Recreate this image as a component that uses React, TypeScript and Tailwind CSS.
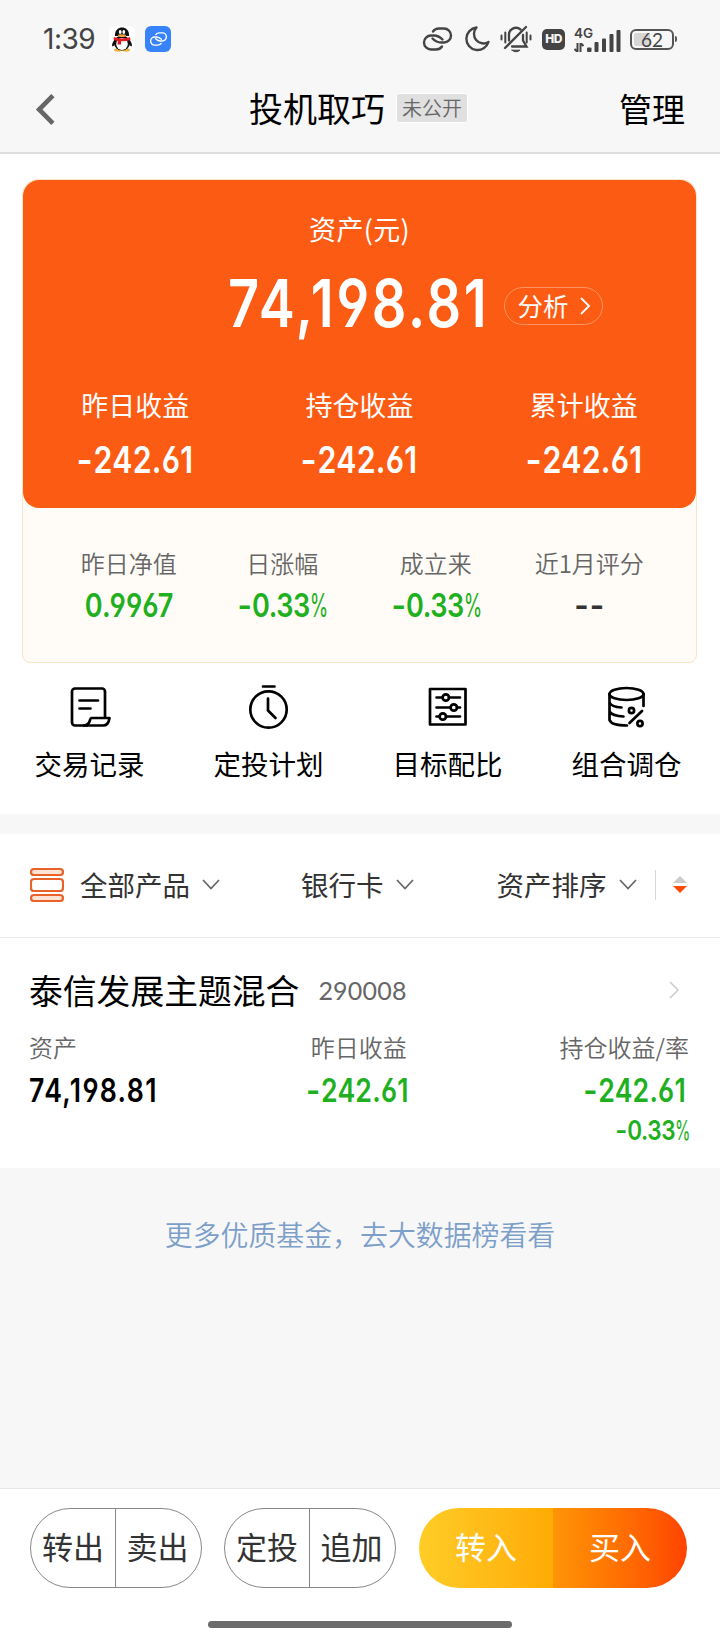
import type { ReactNode } from 'react';
import clsx from 'clsx';

interface NumProps {
  children: string;
  className?: string;
  origin?: 'left' | 'center' | 'right';
}

const ORIGINS = {
  left: 'origin-left',
  center: 'origin-center',
  right: 'origin-right',
};

// Condensed figures, with a wider minus and a lighter, narrower percent sign
function Num({ children, className, origin = 'center' }: NumProps) {
  const tracking = children.includes(',') ? 'tracking-[0.05em]' : children.endsWith('%') ? 'tracking-[-0.015em]' : 'tracking-[0.008em]';
  return (
    <span
      className={clsx(
        "inline-block scale-x-[0.82] whitespace-nowrap font-['Inter',sans-serif] font-semibold leading-none [font-feature-settings:'cv03','cv04']",
        tracking,
        ORIGINS[origin],
        className
      )}
    >
      {children.split(/([-%])/).filter(Boolean).map((part, i) => {
        if (part === '-') return <span key={i} className="mx-[0.04em] inline-block scale-x-[1.15]">-</span>;
        if (part === '%') return <span key={i} className="inline-block w-[0.6em] origin-left scale-x-[0.7] font-normal">%</span>;
        return part;
      })}
    </span>
  );
}

function LinkIcon({ className }: { className?: string }) {
  return (
    <svg viewBox="0 0 31 24" fill="none" stroke="currentColor" strokeWidth="2.4" strokeLinecap="round" className={className}>
      <path d="M11 4.500 Q13 1.500 17 1.500 H22 A7 7 0 0 1 22 15.500 H19 Q14.500 15.500 10.500 11.500" />
      <path d="M20 19.500 Q18 22.500 14 22.500 H9 A7 7 0 0 1 9 8.500 H12 Q16.500 8.500 20.500 12.500" />
    </svg>
  );
}

function Chevron({ dir, className }: { dir: 'left' | 'right' | 'down'; className?: string }) {
  const d = { left: 'M9 1 L1 9 L9 17', right: 'M1 1 L9 9 L1 17', down: 'M1 1 L9 9.5 L17 1' }[dir];
  return (
    <svg viewBox={dir === 'down' ? '0 0 18 11' : '0 0 10 18'} fill="none" stroke="currentColor" className={clsx('overflow-visible', className)}>
      <path d={d} />
    </svg>
  );
}

function StatusBar() {
  return (
    <div className="flex h-[78px] items-center pl-[43px] pr-[43px] text-[#444]">
      <span className="w-[66px] font-['Inter',sans-serif] text-[28px] leading-none tracking-[-0.5px]">1:39</span>
      <svg viewBox="0 0 26 26" className="h-[26px] w-[26px]">
        <rect width="26" height="26" rx="6" fill="#fff" />
        <ellipse cx="9" cy="24" rx="4" ry="1.7" fill="#f3b23c" />
        <ellipse cx="17" cy="24" rx="4" ry="1.7" fill="#f3b23c" />
        <path d="M6 13 Q2 18 3.4 20.5 Q5 20 6 18 Z M20 13 Q24 18 22.6 20.5 Q21 20 20 18 Z" fill="#111" />
        <ellipse cx="13" cy="17" rx="8" ry="7.5" fill="#111" />
        <path d="M6 10 C5 -1.500 21 -1.500 20 10 Z" fill="#111" />
        <ellipse cx="13" cy="18" rx="5.800" ry="6" fill="#fff" />
        <ellipse cx="11.200" cy="6" rx="1.400" ry="1.900" fill="#fff" />
        <ellipse cx="14.800" cy="6" rx="1.400" ry="1.900" fill="#fff" />
        <ellipse cx="13" cy="9.700" rx="4" ry="1.400" fill="#f3a23c" />
        <path d="M5 11 Q13 14 21 11 L21.500 14 Q17 15.500 12 15.300 L12 18.500 H8.500 L8.800 15 Q6 14.500 4.500 13.500 Z" fill="#e11d24" />
      </svg>
      <span className="ml-[10px] flex h-[26px] w-[26px] items-center justify-center rounded-[6px] bg-[#3783fb] text-white">
        <LinkIcon className="h-[14px] w-[19px]" />
      </span>

      <div className="ml-auto flex items-center">
        <LinkIcon className="h-[24px] w-[31px]" />
        <svg viewBox="0 0 26 26" fill="none" stroke="currentColor" strokeWidth="2.400" strokeLinejoin="round" className="ml-[11px] h-[26px] w-[26px]">
          <path d="M12.500 1.500 A11.300 11.300 0 1 0 24.500 16 A9.500 9.500 0 0 1 12.500 1.500 Z" />
        </svg>
        <svg viewBox="0 0 32 28" fill="none" stroke="currentColor" strokeWidth="2" strokeLinecap="round" className="ml-[10px] h-[28px] w-[32px]">
          <path d="M1.500 10.500 V14.500 M5.300 7.500 V17.500 M30.500 10.500 V14.500 M26.700 7.500 V17.500" />
          <path d="M9 15.500 V10.500 A7 7 0 0 1 20.500 4.500" strokeWidth="2.300" />
          <path d="M23 10 V15.500 L26.500 21.500 H12" strokeWidth="2.300" />
          <path d="M5 23 L26 2" strokeWidth="2.300" />
          <path d="M12 25.200 H20 Q16 28.500 12 25.200 Z" fill="currentColor" strokeWidth="1" />
        </svg>
        <span className="ml-[10px] flex h-[21px] w-[23px] items-center justify-center rounded-[5px] bg-[#444] font-['Inter',sans-serif] text-[12px] font-extrabold leading-none tracking-[-0.5px] text-[#f7f7f7]">
          HD
        </span>
        <div className="ml-[9px] flex h-[25px] w-[47px] items-end">
          <div className="flex h-full w-[10px] flex-col justify-between">
            <span className="font-['Inter',sans-serif] text-[13.500px] font-semibold leading-[12px]">4G</span>
            <svg viewBox="0 0 10 9" fill="none" stroke="currentColor" strokeWidth="2" className="h-[9px] w-[10px]">
              <path d="M3.500 0 V9 L0.500 6 M6.500 9 V0 L9.500 3" />
            </svg>
          </div>
          <svg viewBox="0 0 34 24" fill="currentColor" className="ml-[3px] h-[24px] w-[34px]">
            <rect x="0" y="19.500" width="4.500" height="4.500" rx="1" />
            <rect x="7.500" y="14" width="4" height="10" rx="1" />
            <rect x="15" y="10.500" width="4" height="13.500" rx="1" />
            <rect x="22.500" y="6" width="4" height="18" rx="1" />
            <rect x="29.500" y="2" width="4" height="22" rx="1" />
          </svg>
        </div>
        <div className="ml-[9px] flex h-[21px] w-[44px] items-center rounded-[6px] border-2 border-[#555] bg-[linear-gradient(90deg,#d6d6d6_45%,#f7f7f7_45%)] bg-clip-content p-[2px]">
          <span className="w-full text-center font-['Lato',sans-serif] text-[19px] leading-none">62</span>
        </div>
        <span className="ml-[1px] h-[6px] w-[2px] rounded-r bg-[#555]" />
      </div>
    </div>
  );
}

function Header() {
  return (
    <div className="flex h-[76px] items-center border-b-2 border-[#dedede] pb-[14px] text-black">
      <Chevron dir="left" className="ml-[37px] mt-[3px] h-[31px] w-[18px] stroke-[2.700] text-[#666]" />
      <h1 className="ml-[194px] text-[34px] leading-none">投机取巧</h1>
      <span className="ml-[11px] flex h-[30px] w-[72px] items-center justify-center rounded-[3px] border border-white bg-[#e0e0e0] pb-[1px] text-[20px] font-[350] leading-none text-[#666]">
        未公开
      </span>
      <button className="ml-auto mr-[35px] text-[33px] leading-none">管理</button>
    </div>
  );
}

const GAINS = [
  { label: '昨日收益', value: '-242.61' },
  { label: '持仓收益', value: '-242.61' },
  { label: '累计收益', value: '-242.61' },
];

const STATS = [
  { label: '昨日净值', value: '0.9967', color: 'text-[#1fb01f]' },
  { label: '日涨幅', value: '-0.33%', color: 'text-[#1fb01f]' },
  { label: '成立来', value: '-0.33%', color: 'text-[#1fb01f]' },
  { label: '近1月评分', value: '--', color: 'text-[#333]' },
];

function AssetCard() {
  return (
    <section className="ml-[22px] mr-[23px] mt-[25px] h-[484px] rounded-t-[16px] rounded-b-[8px] border border-[#f6e5c6] bg-[#fffcf7]">
      <div className="h-[328px] rounded-[16px] bg-[#fc5b13] text-white">
        <p className="pt-[35px] text-center text-[27px] leading-[28px] tracking-[0.3px]">资产(元)</p>
        <div className="mt-[35px] flex h-[50px] items-center pl-[205px]">
          <span className="w-[258px]">
            <Num origin="left" className="text-[66px]">74,198.81</Num>
          </span>
          <button className="ml-[18px] mt-[5px] flex h-[38px] w-[99px] items-center justify-center gap-[11px] rounded-full border border-[#fd9463] pb-[1px] text-[25.500px] leading-none">
            分析
            <Chevron dir="right" className="mt-[1px] h-[18px] w-[10px] stroke-[1.8]" />
          </button>
        </div>
        <div className="mt-[63px] grid grid-cols-3">
          {GAINS.map((g) => (
            <div key={g.label} className="flex flex-col items-center">
              <span className="text-[27px] leading-[28px]">{g.label}</span>
              <Num className="mt-[22px] text-[37px]">{g.value}</Num>
            </div>
          ))}
        </div>
      </div>
      <div className="grid grid-cols-4 pl-[29px] pr-[30px] pt-[42px]">
        {STATS.map((s) => (
          <div key={s.label} className="flex flex-col items-center">
            <span className="whitespace-nowrap text-[24px] font-[350] leading-[26px] text-[#666]">{s.label}</span>
            <Num className={clsx('mt-[13px] text-[33px]', s.color)}>{s.value}</Num>
          </div>
        ))}
      </div>
    </section>
  );
}

function ActionIcon({ children }: { children: ReactNode }) {
  return (
    <svg viewBox="0 0 46 46" fill="none" stroke="currentColor" strokeWidth="2.700" strokeLinecap="round" strokeLinejoin="round" className="h-[46px] w-[46px]">
      {children}
    </svg>
  );
}

const ACTIONS = [
  {
    label: '交易记录',
    icon: (
      <ActionIcon>
        <path d="M20 41.500 H8 A3 3 0 0 1 5 38.500 V7.500 A3 3 0 0 1 8 4.500 H35 A3 3 0 0 1 38 7.500 V33" />
        <path d="M12.500 16.500 H31 M12.500 24.500 H23.500" />
        <path d="M17 41.500 H36 Q41.500 41.500 42.500 34 H24.500 Q23.500 34 23 36 Q22 41 17 41.500" />
      </ActionIcon>
    ),
  },
  {
    label: '定投计划',
    icon: (
      <ActionIcon>
        <circle cx="22.500" cy="25.500" r="18.200" />
        <path d="M17 2.500 H28.500 M22 14.500 V26.500 L29.500 34" />
      </ActionIcon>
    ),
  },
  {
    label: '目标配比',
    icon: (
      <ActionIcon>
        <rect x="5" y="5" width="35.500" height="35.500" />
        <path d="M11.500 13.500 H17.500 M24 13.500 H35 M11.500 23.500 H25.500 M32 23.500 H35 M11.500 32.500 H14.500 M21 32.500 H35" />
        <circle cx="20.800" cy="13.500" r="3.200" />
        <circle cx="28.800" cy="23.500" r="3.200" />
        <circle cx="17.800" cy="32.500" r="3.200" />
      </ActionIcon>
    ),
  },
  {
    label: '组合调仓',
    icon: (
      <ActionIcon>
        <ellipse cx="22.500" cy="10" rx="17" ry="6" />
        <path d="M5.500 10 V36 Q7.500 41.500 23 41.500 M39.500 10 V22 M5.500 18.500 Q7.500 23 17.500 23.500 M5.500 27.500 Q8.500 32 19.500 32.500 M38 27 L25.500 39" />
        <circle cx="27.500" cy="26.500" r="2.600" />
        <circle cx="36" cy="39.500" r="2.600" />
      </ActionIcon>
    ),
  },
];

function Actions() {
  return (
    <nav className="grid h-[151px] grid-cols-4 pr-[4px] pt-[21px]">
      {ACTIONS.map((a) => (
        <button key={a.label} className="flex flex-col items-center text-black">
          {a.icon}
          <span className="mt-[19px] text-[27.500px] leading-[28px]">{a.label}</span>
        </button>
      ))}
    </nav>
  );
}

function Filters() {
  return (
    <div className="flex h-[104px] items-center border-b border-[#e8e8e8] pb-[2px] text-[27.500px] leading-none text-[#333]">
      <svg viewBox="0 0 34 34" fill="#fff" stroke="#e8622a" strokeWidth="2.200" className="ml-[30px] h-[34px] w-[34px]">
        <rect x="1" y="1" width="32" height="6" rx="3" fill="#fde3d3" />
        <rect x="1" y="11" width="32" height="12" rx="3" />
        <rect x="1" y="27" width="32" height="6" rx="3" fill="#fde3d3" />
      </svg>
      <button className="ml-[16px] flex items-center gap-[12px]">
        全部产品
        <Chevron dir="down" className="h-[11px] w-[18px] stroke-[1.7] text-[#666]" />
      </button>
      <button className="ml-[81px] flex items-center gap-[12px]">
        银行卡
        <Chevron dir="down" className="h-[11px] w-[18px] stroke-[1.7] text-[#666]" />
      </button>
      <button className="ml-[83px] flex items-center gap-[12px]">
        资产排序
        <Chevron dir="down" className="h-[11px] w-[18px] stroke-[1.7] text-[#666]" />
      </button>
      <span className="ml-[18px] h-[30px] w-px bg-[#d8d8d8]" />
      <svg viewBox="0 0 14 17" className="ml-[17px] h-[17px] w-[14px]">
        <path d="M0 7 L7 0 L14 7 Z" fill="#ccc" />
        <path d="M0 10 L7 17 L14 10 Z" fill="#fb4a07" />
      </svg>
    </div>
  );
}

function FundItem() {
  return (
    <section className="h-[230px] pl-[29px] pr-[31px]">
      <div className="flex items-center pt-[34px]">
        <h2 className="text-[33.800px] leading-[36px] text-black">泰信发展主题混合</h2>
        <span className="ml-[19px] font-['Lato',sans-serif] text-[25px] leading-none tracking-[0.2px] text-[#666]">290008</span>
        <Chevron dir="right" className="ml-auto mr-[10px] h-[18px] w-[10px] stroke-[1.6] text-[#ccc]" />
      </div>
      <div className="mt-[26px] flex justify-between text-[24px] font-[350] leading-[26px] text-[#666]">
        <span className="w-[135px]">资产</span>
        <span className="-ml-[6px]">昨日收益</span>
        <span>持仓收益/率</span>
      </div>
      <div className="mt-[15px] flex justify-between">
        <span className="w-[200px]">
          <Num origin="left" className="text-[32.500px] text-black">74,198.81</Num>
        </span>
        <span className="flex w-[176px] justify-center">
          <Num className="text-[32.500px] text-[#1fb01f]">-242.61</Num>
        </span>
        <span className="flex w-[204px] flex-col items-end text-[#1fb01f]">
          <Num origin="right" className="mr-[3px] text-[32.500px]">-242.61</Num>
          <Num origin="right" className="mt-[9px] text-[27.500px]">-0.33%</Num>
        </span>
      </div>
    </section>
  );
}

function SplitButton({ left, right }: { left: string; right: string }) {
  return (
    <div className="flex h-[80px] w-[172px] rounded-full border border-[#888] text-[31px] leading-none text-[#333]">
      <button className="w-[85px] border-r border-[#888] pb-[5px]">{left}</button>
      <button className="flex-1 pb-[5px] pr-[2px]">{right}</button>
    </div>
  );
}

function BottomBar() {
  return (
    <footer className="h-[152px] border-t border-[#e8e8e8] bg-white">
      <div className="flex pl-[30px] pt-[19px]">
        <SplitButton left="转出" right="卖出" />
        <div className="w-[22px]" />
        <SplitButton left="定投" right="追加" />
        <div className="ml-[23px] flex h-[80px] w-[268px] overflow-hidden rounded-full text-[31px] leading-none text-white">
          <button className="flex-1 bg-linear-to-r from-[#ffcc26] to-[#ffab03] pb-[5px]">转入</button>
          <button className="flex-1 bg-linear-to-r from-[#ff9406] to-[#ff4200] pb-[5px]">买入</button>
        </div>
      </div>
      <div className="mx-auto mt-[33px] h-[7px] w-[304px] rounded-full bg-[#6b6b6b]" />
    </footer>
  );
}

export default function App() {
  return (
    <div className="flex h-[1640px] w-[720px] flex-col overflow-hidden bg-white font-['Noto_Sans_CJK_SC',sans-serif]">
      <header className="bg-[#f7f7f7]">
        <StatusBar />
        <Header />
      </header>
      <AssetCard />
      <Actions />
      <div className="h-[20px] bg-[#f7f7f7]" />
      <Filters />
      <FundItem />
      <div className="flex-1 bg-[#f7f7f7] pt-[52px] text-center">
        <a className="text-[27.900px] font-[350] leading-[28px] text-[#7c9fc9]">更多优质基金，去大数据榜看看</a>
      </div>
      <BottomBar />
    </div>
  );
}
